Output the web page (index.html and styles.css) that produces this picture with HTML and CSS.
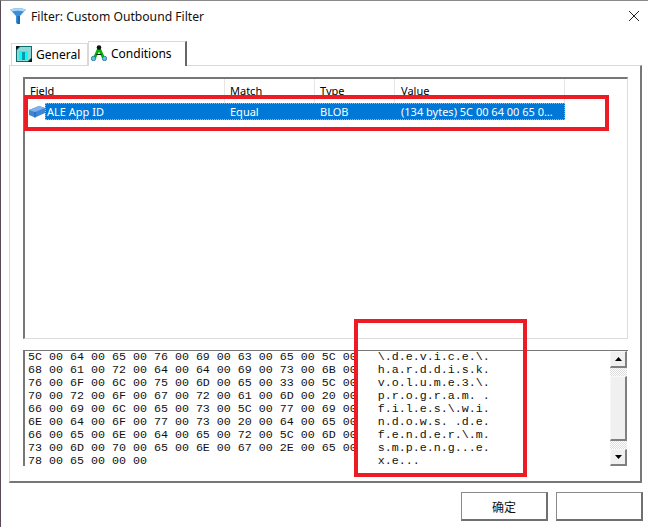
FILE: index.html
```html
<!DOCTYPE html>
<html lang="en">
<head>
<meta charset="utf-8">
<title>Filter: Custom Outbound Filter</title>
<link rel="stylesheet" href="styles.css">
</head>
<body>
<div class="dialog">
  <header class="titlebar">
    <svg class="title-icon" width="16" height="16" viewBox="0 0 16 16"><path d="M0 1.500Q8 -1 16 1.500L10 8v8H7.500L6 15V8z" fill="#3f8fd8"/><path d="M0 1.500Q8 -1 16 1.500L14 3.500Q8 2 2 3.500z" fill="#a8d8f4"/><path d="M7.500 8h2.500v8H7.500z" fill="#1d6bb0"/></svg>
    <span class="title-text">Filter: Custom Outbound Filter</span>
    <svg class="close" width="10" height="10" viewBox="0 0 10 10"><path d="M0 0l10 10M10 0L0 10" stroke="#222" stroke-width="1" fill="none"/></svg>
  </header>
  <nav class="tabs">
    <div class="tab tab-general">
      <svg width="16" height="16" viewBox="0 0 16 16"><rect x="0" y="0" width="16" height="16" fill="#0a6e6e"/><path d="M1 4l3-3h11v11l-3 3H1z" fill="#8fd8d8"/><rect x="3" y="5" width="9" height="9" fill="#0ff"/><rect x="6" y="6" width="3" height="8" fill="#0a9aa8"/><path d="M12 16l4-4v4z" fill="#111"/><path d="M0 0h4L0 4z" fill="#111"/></svg>
      <span>General</span>
    </div>
    <div class="tab tab-active">
      <svg width="16" height="16" viewBox="0 0 16 16"><path d="M8 3L3.500 13M8 3l4.500 10" fill="none" stroke="#00b400" stroke-width="3"/><path d="M5.500 9.500h5" stroke="#111" stroke-width="1"/><circle cx="8" cy="2.500" r="2.300" fill="#111"/><circle cx="2.500" cy="13.500" r="2.200" fill="#5bc8e8" stroke="#1a6a8a" stroke-width=".8"/><circle cx="13.500" cy="13.500" r="2.200" fill="#5bc8e8" stroke="#1a6a8a" stroke-width=".8"/></svg>
      <span>Conditions</span>
    </div>
  </nav>
  <section class="panel">
    <div class="list">
      <div class="list-head">
        <div class="col col-field">Field</div>
        <div class="col col-match">Match</div>
        <div class="col col-type">Type</div>
        <div class="col col-value">Value</div>
      </div>
      <div class="row">
        <svg class="row-icon" width="16" height="13" viewBox="0 0 16 13"><path d="M0 5l10-4 6 2v5L6 12.500 0 10z" fill="#3f86d6"/><path d="M0 5l10-4 6 2L6 7z" fill="#7fb2ea"/><path d="M6 7v5.500" stroke="#24609f"/></svg>
        <div class="row-cells">
          <div class="cell cell-field">ALE App ID</div>
          <div class="cell cell-match">Equal</div>
          <div class="cell cell-type">BLOB</div>
          <div class="cell cell-value">(134 bytes) 5C 00 64 00 65 0…</div>
        </div>
      </div>
      <div class="mark mark-row"></div>
    </div>
    <div class="hex">
      <pre class="hex-bytes">5C 00 64 00 65 00 76 00 69 00 63 00 65 00 5C 00
68 00 61 00 72 00 64 00 64 00 69 00 73 00 6B 00
76 00 6F 00 6C 00 75 00 6D 00 65 00 33 00 5C 00
70 00 72 00 6F 00 67 00 72 00 61 00 6D 00 20 00
66 00 69 00 6C 00 65 00 73 00 5C 00 77 00 69 00
6E 00 64 00 6F 00 77 00 73 00 20 00 64 00 65 00
66 00 65 00 6E 00 64 00 65 00 72 00 5C 00 6D 00
73 00 6D 00 70 00 65 00 6E 00 67 00 2E 00 65 00
78 00 65 00 00 00</pre>
      <pre class="hex-text">\.d.e.v.i.c.e.\.
h.a.r.d.d.i.s.k.
v.o.l.u.m.e.3.\.
p.r.o.g.r.a.m. .
f.i.l.e.s.\.w.i.
n.d.o.w.s. .d.e.
f.e.n.d.e.r.\.m.
s.m.p.e.n.g...e.
x.e...</pre>
      <div class="scrollbar">
        <div class="arrow"><svg width="7" height="4" viewBox="0 0 7 4"><path d="M3.500 0L7 4H0z" fill="#000"/></svg></div>
        <div class="track"></div>
        <div class="thumb"></div>
        <div class="track"></div>
        <div class="arrow"><svg width="7" height="4" viewBox="0 0 7 4"><path d="M0 0h7L3.500 4z" fill="#000"/></svg></div>
      </div>
      <div class="mark mark-hex"></div>
    </div>
  </section>
  <footer class="buttons">
    <button class="btn">确定</button>
    <button class="btn"></button>
  </footer>
</div>
</body>
</html>
```
FILE: styles.css
```css
* { box-sizing: border-box; }
html, body { margin: 0; padding: 0; }
body { width: 648px; height: 527px; background: #fff; overflow: hidden; font-family: "Noto Sans", "Open Sans", sans-serif; font-size: 12px; color: #000; }
.dialog { width: 648px; height: 527px; display: flex; flex-direction: column; border-top: 1px solid #8a8a8a; border-left: 1px solid #5a4a55; }
.titlebar { height: 38px; display: flex; align-items: center; padding: 0 9px 9px 9px; gap: 5px; }
.title-text { font-size: 12.15px; color: #111; padding-top: 1px; }
.close { margin-left: auto; }
.tabs { display: flex; height: 26px; padding-left: 10px; align-items: flex-end; }
.tab { display: flex; align-items: center; gap: 4px; border: 1px solid #d9d9d9; border-bottom: none; font-size: 12px; }
.tab-general { width: 77px; height: 22px; padding: 0 0 1px 4px; }
.tab-active { width: 99px; height: 25px; margin-bottom: -1px; padding: 0 0 2px 2px; border-right: 2px solid #666; background: #fff; position: relative; }
.panel { width: 633px; height: 418px; margin-left: 8px; border: 1px solid #d9d9d9; border-right: 2px solid #777; border-bottom: 2px solid #777; padding: 11px 12px 0 13px; display: flex; flex-direction: column; }
.list { height: 262px; flex: none; border: 1px solid #dcdcdc; border-top: 2px solid #777; border-left: 2px solid #777; position: relative; }
.list-head { display: flex; height: 24px; font-size: 11px; line-height: 23px; }
.col { padding-left: 5px; border-right: 1px solid #e5e5e5; }
.col-field { width: 200px; }
.col-match { width: 90px; }
.col-type { width: 80px; }
.col-value { width: 170px; padding-left: 6px; }
.row { display: flex; align-items: center; height: 17px; padding-left: 4px; color: #fff; font-size: 11px; }
.row-icon { flex: none; }
.row-cells { display: flex; width: 520px; height: 17px; line-height: 17px; background: #0078d7; outline: 1px dotted #e8a860; outline-offset: -1px; }
.cell { overflow: hidden; white-space: nowrap; }
.cell-field { width: 185px; padding-left: 2px; }
.cell-match { width: 90px; }
.cell-type { width: 81px; }
.cell-value { width: 164px; }
.mark { position: absolute; border: 4px solid #ed1c24; pointer-events: none; }
.mark-row { left: -1px; top: 16px; width: 585px; height: 36px; }
.hex { margin-top: 11px; height: 116px; flex: none; position: relative; display: flex; border-top: 1px solid #777; border-left: 2px solid #777; padding-left: 3px; }
.hex-bytes, .hex-text { margin: 0; font-family: "Liberation Mono", monospace; font-size: 11.67px; line-height: 13px; color: #111; }
.hex-text { margin-left: 21px; }
.scrollbar { margin-left: auto; margin-right: 1px; width: 17px; height: 115px; display: flex; flex-direction: column; flex: none; }
.arrow { height: 17px; display: flex; align-items: center; justify-content: center; background: #f0f0f0; border: 2px solid #808080; border-top: 1px solid #f8f8f8; border-left: 1px solid #f8f8f8; }
.track { height: 8px; background: repeating-conic-gradient(#fff 0 25%, #dcdcdc 0 50%) 0 0 / 2px 2px; }
.thumb { flex: 1; background: #f0f0f0; border: 2px solid #808080; border-top: 1px solid #f8f8f8; border-left: 1px solid #f8f8f8; }
.mark-hex { left: 329px; top: -32px; width: 173px; height: 158px; }
.buttons { display: flex; justify-content: flex-end; gap: 8px; padding: 9px 5px 0 0; }
.btn { width: 87px; height: 29px; padding: 0; background: #fff; border: 2px solid #707070; border-top: 1px solid #8a8a8a; border-left: 1px solid #8a8a8a; font-family: "Noto Sans CJK SC", sans-serif; font-size: 12px; color: #111; }
```
